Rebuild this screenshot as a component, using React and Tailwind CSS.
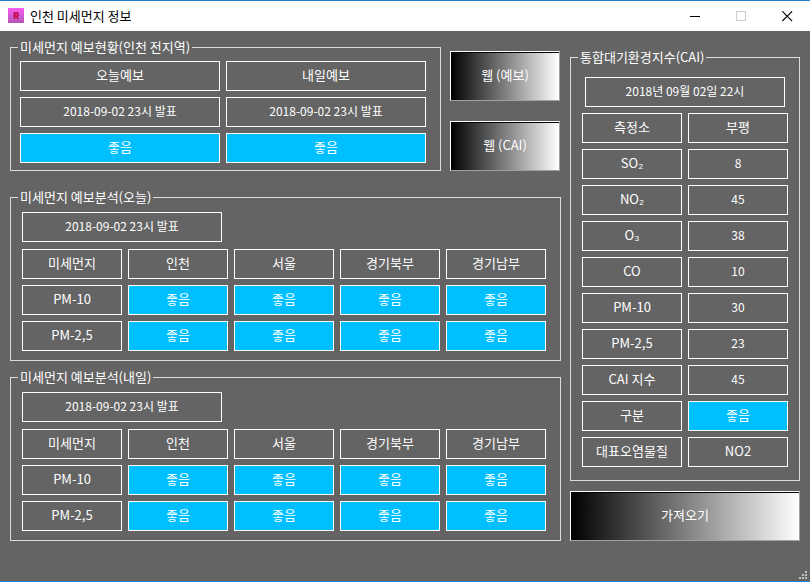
const cellBase = "h-[30px] border border-white px-0 pt-0 pb-0.5 text-center font-normal";
const goodCell = "h-[30px] border border-white bg-[#00bfff] px-0 pt-0 pb-0.5 text-center font-normal";
const dateBox = "flex h-[30px] w-[200px] items-center justify-center border border-white pb-0.5 text-xs";

const regions = ["인천", "서울", "경기북부", "경기남부"];

const indexRows = [
  ["측정소", "부평"],
  ["SO₂", "8"],
  ["NO₂", "45"],
  ["O₃", "38"],
  ["CO", "10"],
  ["PM-10", "30"],
  ["PM-2,5", "23"],
  ["CAI 지수", "45"],
  ["구분", "좋음"],
  ["대표오염물질", "NO2"],
];

function valueSize(text) {
  return /^\d+$/.test(text) ? " text-xs" : " text-[13px]";
}

function Group({ title, className = "", children }) {
  return (
    <fieldset className={"min-w-0 border border-[#dcdcdc] " + className}>
      <legend className="ml-[7px] px-0.5 text-[13px] leading-[12px] whitespace-nowrap">{title}</legend>
      {children}
    </fieldset>
  );
}

function ActionButton({ children }) {
  return (
    <button
      type="button"
      className="h-[50px] w-full border border-t-white border-r-[#a0a0a0] border-b-[#a0a0a0] border-l-white bg-linear-to-r/srgb from-black to-white pb-0.5 text-[13px] shadow-[inset_0_1px_0_#000]"
    >
      {children}
    </button>
  );
}

function Analysis({ title }) {
  return (
    <Group title={title}>
      <div className="pt-[9px] pr-2 pb-[3px] pl-[5px]">
        <p className={dateBox + " ml-1.5"}>2018-09-02 23시 발표</p>
        <table className="mt-px w-full table-fixed border-separate border-spacing-1.5">
          <thead>
            <tr>
              <th scope="col" className={cellBase + " text-[13px]"}>미세먼지</th>
              {regions.map((region) => (
                <th key={region} scope="col" className={cellBase + " text-[13px]"}>{region}</th>
              ))}
            </tr>
          </thead>
          <tbody>
            {["PM-10", "PM-2,5"].map((name) => (
              <tr key={name}>
                <th scope="row" className={cellBase + " text-[13px]"}>{name}</th>
                {regions.map((region) => (
                  <td key={region} className={goodCell + " text-[13px]"}>좋음</td>
                ))}
              </tr>
            ))}
          </tbody>
        </table>
      </div>
    </Group>
  );
}

function TitleBar() {
  return (
    <header className="flex h-[30px] items-center bg-white text-black">
      <svg className="ml-2 h-4 w-4" viewBox="0 0 16 16" aria-hidden="true">
        <defs>
          <linearGradient id="badge" x1="0" y1="0" x2="0" y2="1">
            <stop offset="0" stopColor="#f95cf0" />
            <stop offset="1" stopColor="#b455b4" />
          </linearGradient>
        </defs>
        <rect width="16" height="15" fill="url(#badge)" />
        <path d="M6.500 11V5H9a1 1 0 0 1 1 1v1a1 1 0 0 1-1 1H6.500M8.500 8l1.500 3" fill="none" stroke="#c00038" strokeWidth="1.500" />
      </svg>
      <h1 className="ml-1.5 flex-1 text-[13px]">인천 미세먼지 정보</h1>
      <button type="button" aria-label="최소화" className="flex h-full w-[46px] items-center justify-center">
        <svg width="11" height="11" viewBox="0 0 11 11" shapeRendering="crispEdges"><path d="M0 5.5h10" stroke="#000" /></svg>
      </button>
      <button type="button" aria-label="최대화" disabled className="flex h-full w-[46px] items-center justify-center">
        <svg width="11" height="11" viewBox="0 0 11 11" shapeRendering="crispEdges"><path d="M.5.5h9v9h-9z" fill="none" stroke="#ccc" /></svg>
      </button>
      <button type="button" aria-label="닫기" className="flex h-full w-[46px] items-center justify-center">
        <svg width="11" height="11" viewBox="0 0 11 11"><path d="M.3.3l9.800 9.800M10.100.3L.3 10.100" stroke="#000" strokeWidth="1.100" /></svg>
      </button>
    </header>
  );
}

export default function App() {
  return (
    <div className="flex min-h-screen flex-col border-y border-[#1e7ed2] bg-[#646464] font-['Noto_Sans_CJK_KR',sans-serif] text-white">
      <TitleBar />
      <main className="flex flex-1 items-start gap-[9px] px-2.5 pt-2.5">
        <div className="flex min-w-0 flex-1 flex-col gap-2.5">
          <div className="mb-2.5 flex gap-[9px] pr-px">
            <Group title="미세먼지 예보현황(인천 전지역)" className="flex-1">
              <div className="pt-0.5 pr-2 pb-px pl-[3px]">
                <table className="w-full table-fixed border-separate border-spacing-1.5">
                  <thead>
                    <tr>
                      <th scope="col" className={cellBase + " text-[13px]"}>오늘예보</th>
                      <th scope="col" className={cellBase + " text-[13px]"}>내일예보</th>
                    </tr>
                  </thead>
                  <tbody>
                    <tr>
                      <td className={cellBase + " text-xs"}>2018-09-02 23시 발표</td>
                      <td className={cellBase + " text-xs"}>2018-09-02 23시 발표</td>
                    </tr>
                    <tr>
                      <td className={goodCell + " text-[13px]"}>좋음</td>
                      <td className={goodCell + " text-[13px]"}>좋음</td>
                    </tr>
                  </tbody>
                </table>
              </div>
            </Group>
            <div className="flex w-[110px] flex-col gap-5 pt-2.5">
              <ActionButton>웹 (예보)</ActionButton>
              <ActionButton>웹 (CAI)</ActionButton>
            </div>
          </div>
          <Analysis title="미세먼지 예보분석(오늘)" />
          <Analysis title="미세먼지 예보분석(내일)" />
        </div>
        <div className="flex w-[230px] flex-col gap-2.5 pt-2.5">
          <Group title="통합대기환경지수(CAI)">
            <div className="px-[5px] pt-3.5 pb-[7px]">
              <p className={dateBox + " mx-auto"}>2018년 09월 02일 22시</p>
              <table className="w-full table-fixed border-separate border-spacing-1.5">
                <tbody>
                  {indexRows.map(([name, value]) => (
                    <tr key={name}>
                      <th scope="row" className={cellBase + " text-[13px]"}>{name}</th>
                      <td className={(value === "좋음" ? goodCell : cellBase) + valueSize(value)}>{value}</td>
                    </tr>
                  ))}
                </tbody>
              </table>
            </div>
          </Group>
          <ActionButton>가져오기</ActionButton>
        </div>
      </main>
      <footer className="flex justify-end pr-[3px] pb-0.5">
        <svg width="8" height="8" viewBox="0 0 8 8" fill="#bfbfbf" shapeRendering="crispEdges" aria-hidden="true">
          <path d="M6 0h2v2h-2zM3 3h2v2h-2zM6 3h2v2h-2zM0 6h2v2h-2zM3 6h2v2h-2zM6 6h2v2h-2z" />
        </svg>
      </footer>
    </div>
  );
}
